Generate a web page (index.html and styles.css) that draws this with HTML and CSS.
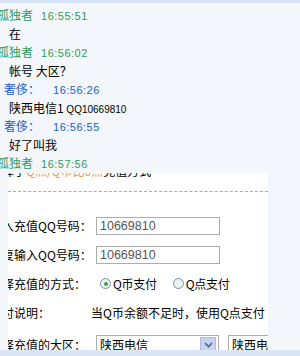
FILE: index.html
```html
<!DOCTYPE html>
<html lang="zh-CN">
<head>
    <meta charset="UTF-8">
    <title>聊天记录</title>
    <link rel="stylesheet" href="styles.css">
</head>
<body>
    <div class="screen">
        <div class="topbar"></div>
        <div class="chat">
            <div class="line name green">孤独者<span class="time">16:55:51</span></div>
            <div class="line msg">在</div>
            <div class="line name green">孤独者<span class="time">16:56:02</span></div>
            <div class="line msg">帐号 大区？</div>
            <div class="line name blue">奢侈：<span class="time">16:56:26</span></div>
            <div class="line msg navy">陕西电信1 <span class="latin">QQ10669810</span></div>
            <div class="line name blue">奢侈：<span class="time">16:56:55</span></div>
            <div class="line msg navy">好了叫我</div>
            <div class="line name green">孤独者<span class="time">16:57:56</span></div>
        </div>

        <div class="shot">
            <div class="shot-inner">
                <div class="head">您选择了<span class="orange">Q点/Q币比0点</span>充值方式</div>
                <div class="dash"></div>

                <div class="row first">
                    <span class="label">请输入充值QQ号码：</span>
                    <span class="input">10669810</span>
                </div>
                <div class="row">
                    <span class="label">请重复输入QQ号码：</span>
                    <span class="input">10669810</span>
                </div>
                <div class="row">
                    <span class="label">请选择充值的方式：</span>
                    <span class="radios">
                        <span class="radio on"></span><span class="opt">Q币支付</span>
                        <span class="radio second"></span><span class="opt">Q点支付</span>
                    </span>
                </div>
                <div class="row">
                    <span class="label short">　支付说明：</span>
                    <span class="note">当Q币余额不足时，使用Q点支付</span>
                </div>
                <div class="row last">
                    <span class="label">请选择充值的大区：</span>
                    <span class="select">陕西电信<span class="arrow"><svg width="9" height="6" viewBox="0 0 9 6"><path d="M1 1 L4.5 4.5 L8 1" fill="none" stroke="#4d6185" stroke-width="1.6"/></svg></span></span>
                    <span class="select small">陕西电信</span>
                </div>
            </div>
        </div>
        <div class="bottombar"></div>
    </div>
</body>
</html>
```

FILE: styles.css
```css
body {
    margin: 0;
    font-family: "Noto Sans CJK SC", "Liberation Sans", sans-serif;
    font-size: 12px;
    background: #f3f7fb;
}
.screen {
    width: 300px;
    height: 356px;
    overflow: hidden;
    display: flex;
    flex-direction: column;
}
.topbar {
    height: 3px;
    background: #d5e3f6;
    flex: none;
}
.chat {
    padding-top: 3px;
    height: 167px;
    flex: none;
}
.line {
    height: 18.5px;
    line-height: 18.5px;
    white-space: nowrap;
}
.name {
    margin-left: -3px;
}
.name.blue {
    margin-left: 4px;
}
.green {
    color: #349a5f;
}
.blue {
    color: #1b62c9;
}
.navy {
    color: #1b1f9a;
}
.time {
    font-family: "Liberation Sans", sans-serif;
    font-size: 11px;
    letter-spacing: 0.5px;
    margin-left: 8px;
}
.blue .time {
    margin-left: 13px;
}
.msg {
    padding-left: 9px;
    color: #000;
}
.latin {
    font-family: "Liberation Sans", sans-serif;
    font-size: 10px;
}
.shot {
    margin-left: 8px;
    width: 260px;
    height: 177px;
    background: #fff;
    overflow: hidden;
    flex: none;
}
.shot-inner {
    margin-top: -9px;
    margin-left: -30px;
    color: #000;
}
.head {
    height: 14px;
    line-height: 14px;
    white-space: nowrap;
}
.orange {
    color: #e39a3b;
}
.dash {
    margin: 13px 0 0 30px;
    width: 260px;
    border-top: 1px dashed #aaa;
}
.row {
    display: flex;
    align-items: center;
    height: 29px;
    white-space: nowrap;
}
.row.first {
    margin-top: 19px;
}
.row.last {
    margin-top: 3px;
}
.label {
    width: 118px;
    flex: none;
}
.label.short {
    width: 113px;
}
.input {
    width: 119px;
    height: 16px;
    line-height: 16px;
    border: 1px solid #a9acb0;
    padding-left: 3px;
    color: #555;
    font-family: "Liberation Sans", sans-serif;
    font-size: 12.5px;
}
.radios {
    display: flex;
    align-items: center;
    margin-left: 4px;
}
.radio {
    width: 9px;
    height: 9px;
    border: 1px solid #7d8fa8;
    border-radius: 50%;
    background: #eef1f4;
    margin-right: 2px;
    display: flex;
    align-items: center;
    justify-content: center;
}
.radio.second {
    margin-left: 16px;
}
.radio.on::after {
    content: "";
    width: 4px;
    height: 4px;
    border-radius: 50%;
    background: #3a9d52;
}
.opt {
    letter-spacing: -0.3px;
}
.select {
    display: flex;
    align-items: center;
    width: 118px;
    height: 18px;
    border: 1px solid #a9acb0;
    padding-left: 3px;
    flex: none;
}
.arrow {
    margin-left: auto;
    margin-right: 2px;
    width: 14px;
    height: 14px;
    background: #c6d3f2;
    border: 1px solid #aebce0;
    display: flex;
    align-items: center;
    justify-content: center;
}
.select.small {
    margin-left: 9px;
    width: 60px;
}
.bottombar {
    height: 6px;
    background: #dae6f5;
    flex: none;
}
```
